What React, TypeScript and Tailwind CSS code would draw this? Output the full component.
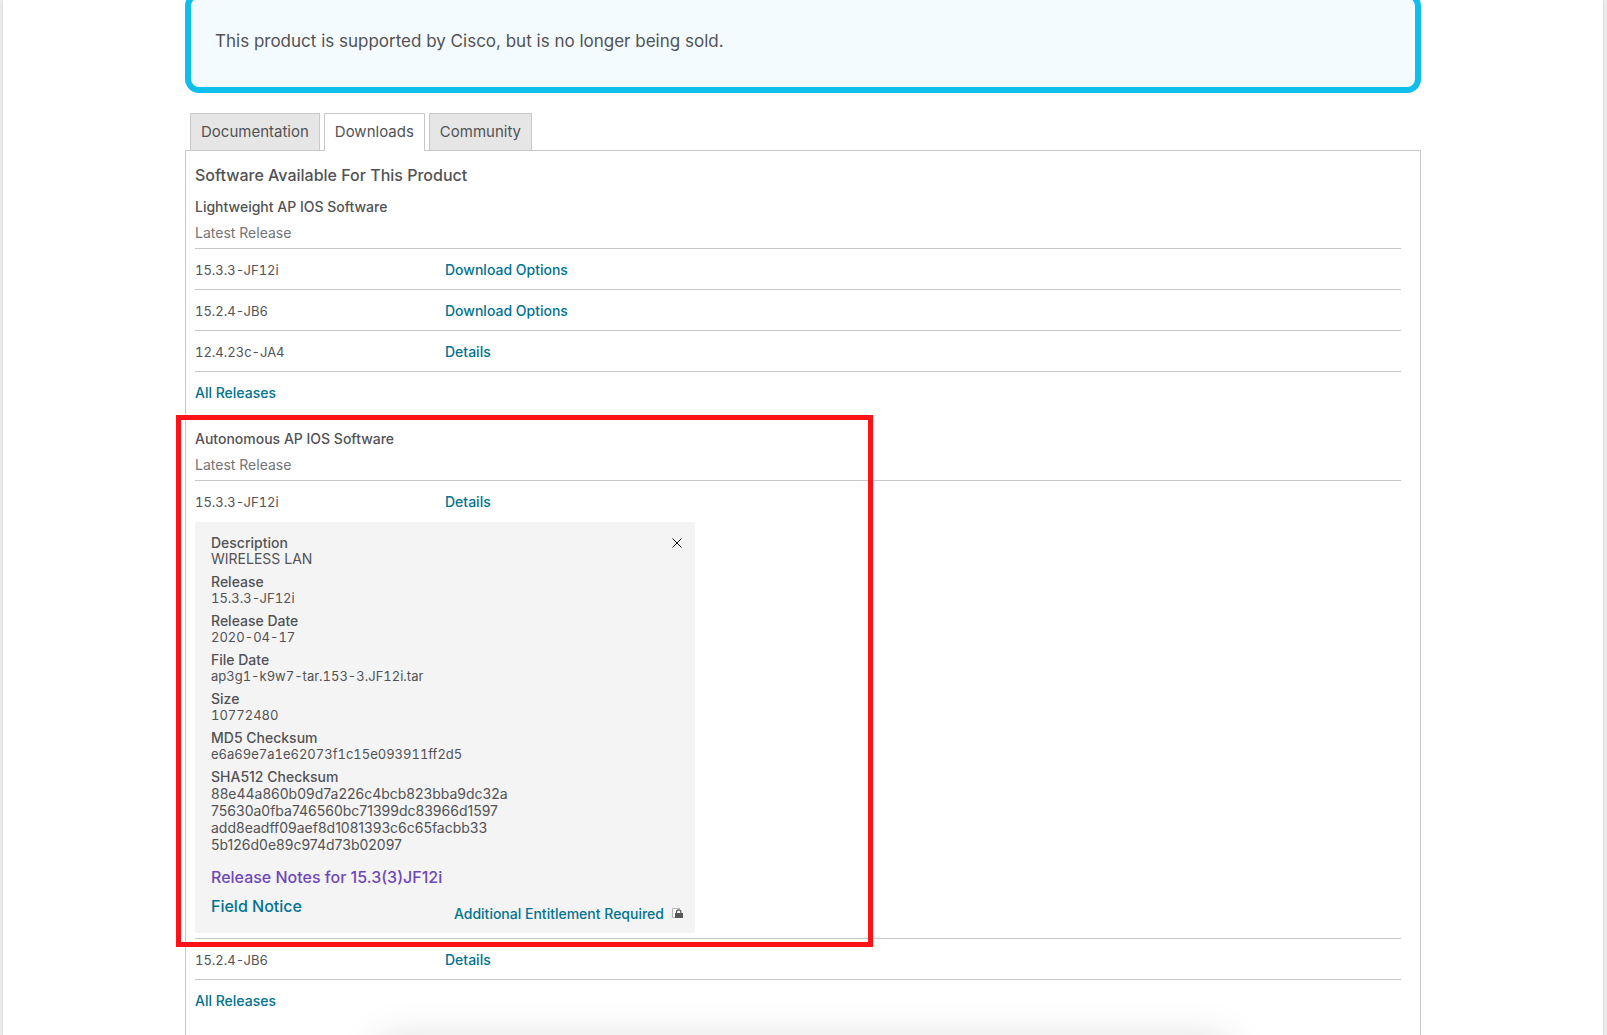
import React from 'react';

const lightweightReleases = [
  { version: '15.3.3-JF12i', action: 'Download Options' },
  { version: '15.2.4-JB6', action: 'Download Options' },
  { version: '12.4.23c-JA4', action: 'Details' },
];

const details = [
  { label: 'Release', value: '15.3.3-JF12i' },
  { label: 'Release Date', value: '2020-04-17' },
  { label: 'File Date', value: 'ap3g1-k9w7-tar.153-3.JF12i.tar' },
  { label: 'Size', value: '10772480' },
  { label: 'MD5 Checksum', value: 'e6a69e7a1e62073f1c15e093911ff2d5' },
];

const sha512 = [
  '88e44a860b09d7a226c4bcb823bba9dc32a',
  '75630a0fba746560bc71399dc83966d1597',
  'add8eadff09aef8d1081393c6c65facbb33',
  '5b126d0e89c974d73b02097',
];

function Tab({ label, active = false }: { label: string; active?: boolean }) {
  return (
    <button
      type="button"
      role="tab"
      aria-selected={active}
      className={
        active
          ? 'relative -mb-px h-[38px] border border-b-0 border-[#c8c8c8] bg-white px-2.5 pb-px'
          : 'h-[37px] border border-b-0 border-[#c8c8c8] bg-[#e6e6e6] px-2.5'
      }
    >
      {label}
    </button>
  );
}

function ReleaseRow({ version, action, open = false }: { version: string; action: string; open?: boolean }) {
  return (
    <tr className={open ? '' : 'border-b border-[#c8c8c8]'}>
      <td className="h-[41px] w-[250px] p-0 pt-0.5 text-[13px] tabular-nums">{version}</td>
      <td className="h-[41px] p-0 pt-0.5">
        <a href="#" className="font-medium text-[#00738e]">{action}</a>
      </td>
    </tr>
  );
}

function ReleaseTable({ title, children }: { title: string; children: React.ReactNode }) {
  return (
    <section>
      <h3 className="font-medium">{title}</h3>
      <table className="mt-1.5 w-full border-collapse">
        <thead>
          <tr className="border-b border-[#c8c8c8]">
            <th colSpan={2} className="p-0 pb-[5px] text-left font-normal text-[#747477]">
              Latest Release
            </th>
          </tr>
        </thead>
        <tbody>{children}</tbody>
      </table>
      <a href="#" className="mt-[11px] inline-block font-medium text-[#00738e]">All Releases</a>
    </section>
  );
}

function LockIcon() {
  return (
    <svg viewBox="0 0 11 11" className="size-[11px]" aria-hidden="true">
      <path d="M0 0h11v11H0z" fill="#fafafa" />
      <path d="M8 .5H.5v9H3" fill="none" stroke="#b5b5b5" />
      <path d="M4.500 5.500V4a2.200 2.200 0 0 1 4.400 0v1.500" fill="none" stroke="#58585b" strokeWidth="1.200" />
      <path d="M3 5h8v5H3z" fill="#58585b" />
    </svg>
  );
}

function ReleaseDetails() {
  return (
    <div className="relative mb-[5px] w-[500px] bg-[#f4f4f4] pt-[13px] pr-3 pb-[9px] pl-4">
      <button type="button" aria-label="Close" className="absolute top-4 right-[13px]">
        <svg viewBox="0 0 10 10" className="size-2.5">
          <path d="M.5.5l9 9M9.500.5l-9 9" stroke="#111" strokeWidth="1" fill="none" />
        </svg>
      </button>
      <dl className="flex flex-col gap-[7px] leading-4">
        <div>
          <dt className="font-medium">Description</dt>
          <dd>WIRELESS LAN</dd>
        </div>
        {details.map((item) => (
          <div key={item.label}>
            <dt className="font-medium">{item.label}</dt>
            <dd className="text-[13px] leading-4 tabular-nums">{item.value}</dd>
          </div>
        ))}
        <div>
          <dt className="font-medium">SHA512 Checksum</dt>
          <dd className="leading-[17px]">
            {sha512.map((line) => (
              <div key={line}>{line}</div>
            ))}
          </dd>
        </div>
      </dl>
      <a href="#" className="mt-3 block text-base leading-6 font-medium text-[#6f47b8]">
        Release Notes for 15.3(3)JF12i
      </a>
      <div className="mt-[5px] flex h-[30px] justify-between">
        <a href="#" className="text-base leading-6 font-medium text-[#00738e]">Field Notice</a>
        <div className="flex items-center gap-2 self-end">
          <a href="#" className="font-medium text-[#00738e]">Additional Entitlement Required</a>
          <LockIcon />
        </div>
      </div>
    </div>
  );
}

export default function App() {
  return (
    <div className="min-h-screen overflow-hidden bg-[#ececec] pr-1 pl-[3px] font-[Inter,sans-serif] text-sm leading-5 text-[#525255]">
      <div className="flex min-h-screen flex-col bg-white shadow-sm">
        <main className="mx-auto flex w-full max-w-[1236px] grow flex-col">
          <div className="-mt-2 rounded-[14px] border-6 border-[#0fbeeb] bg-[#f3fbfe] px-6 pt-[30px] pb-[33px] text-[17px] leading-[26px]">
            This product is supported by Cisco, but is no longer being sold.
          </div>

          <div role="tablist" className="z-10 mt-5 ml-[5px] flex gap-1 text-[15px]">
            <Tab label="Documentation" />
            <Tab label="Downloads" active />
            <Tab label="Community" />
          </div>

          <div className="grow border border-b-0 border-[#c8c8c8] pt-3 pr-[19px] pl-[9px]">
            <h2 className="mb-2.5 text-base leading-6 font-medium">Software Available For This Product</h2>

            <ReleaseTable title="Lightweight AP IOS Software">
              {lightweightReleases.map((release) => (
                <ReleaseRow key={release.version} version={release.version} action={release.action} />
              ))}
            </ReleaseTable>

            <div className="relative mt-[26px]">
              {/* highlight frame around the autonomous software details */}
              <div className="pointer-events-none absolute -top-3.5 -left-[19px] z-10 h-[532px] w-[697px] border-5 border-[#ff1118]" />
              <ReleaseTable title="Autonomous AP IOS Software">
                <ReleaseRow version="15.3.3-JF12i" action="Details" open />
                <tr className="border-b border-[#c8c8c8]">
                  <td colSpan={2} className="p-0">
                    <ReleaseDetails />
                  </td>
                </tr>
                <ReleaseRow version="15.2.4-JB6" action="Details" />
              </ReleaseTable>
            </div>
          </div>
        </main>
      </div>

      {/* top shadow of the bar docked below the window */}
      <div className="pointer-events-none fixed top-full left-1/2 mt-1.5 h-20 w-[850px] -translate-x-1/2 bg-white shadow-[0_0_40px_rgba(0,0,0,0.15)]" />
    </div>
  );
}
